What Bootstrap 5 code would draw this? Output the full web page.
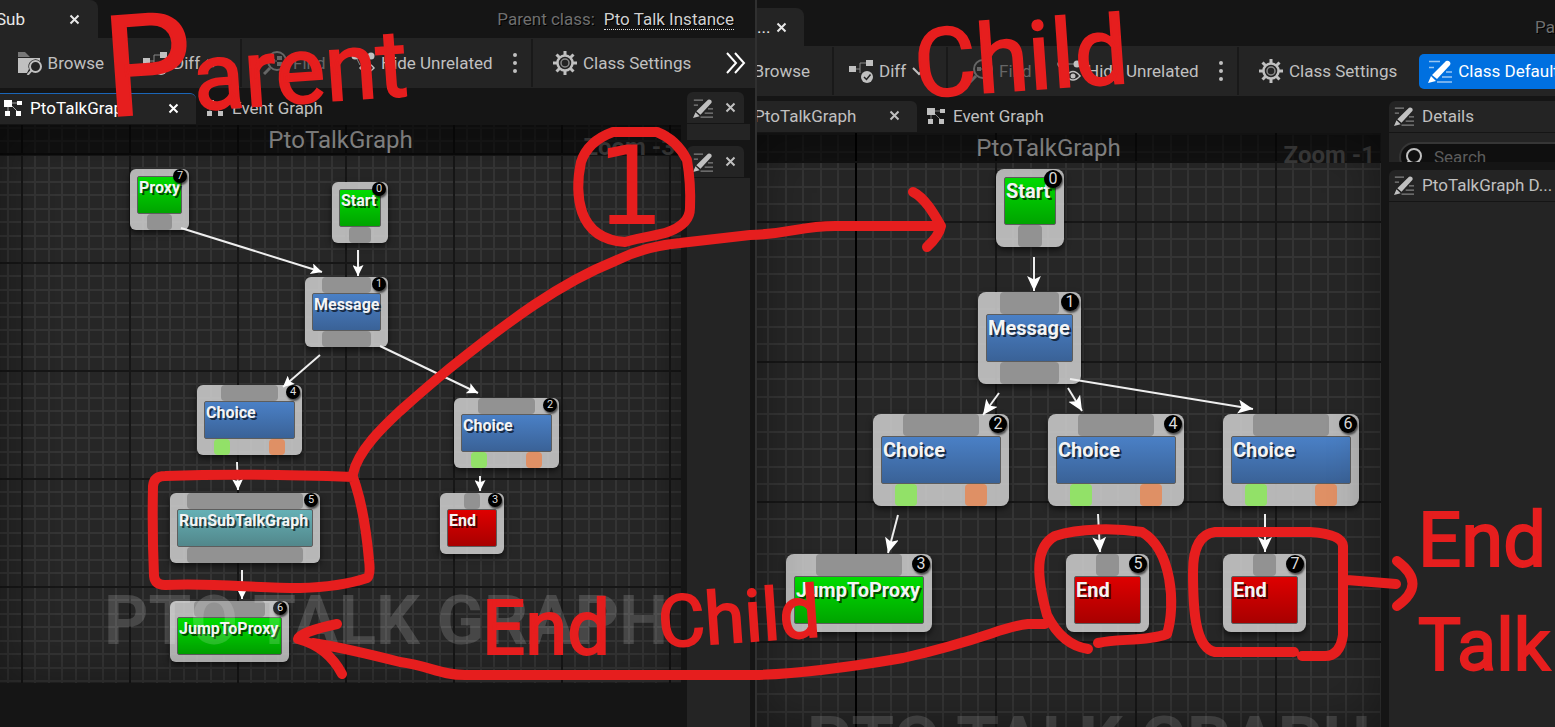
<!DOCTYPE html>
<html lang="en">
<head>
<meta charset="utf-8">
<meta name="viewport" content="width=device-width, initial-scale=1">
<title>Pto Talk Graph – parent and child</title>
<link href="https://cdn.jsdelivr.net/npm/bootstrap@5.3.0/dist/css/bootstrap.min.css" rel="stylesheet">
<style>
  :root { --panel:#242424; --frame:#151515; --fg:#c0c0c0; --ink:#e61e1e; }
  body { background:var(--frame); color:var(--fg); font:17px/20px Roboto, "Liberation Sans", sans-serif; overflow:hidden; }
  .workspace { display:grid; grid-template-columns:minmax(0,757fr) minmax(0,798fr); height:100vh; position:relative; }
  .editor { min-width:0; overflow:hidden; }
  .editor-parent { border-right:2px solid #303030; }
  button, a { color:inherit; font:inherit; white-space:nowrap; }
  .plain { background:none; border:0; padding:0; }
  .titlebar { height:38px; }
  .editor-child .titlebar { height:46px; padding-top:8px; }
  .doc-tab { background:var(--panel); border-radius:0 8px 0 0; color:#e8e8e8; }
  .editor-parent .doc-tab { width:98px; padding-right:18px; }
  .editor-parent .doc-tab span { margin-left:-4px; }
  .editor-child .doc-tab { width:47px; padding-right:17px; }
  .close-x { width:11px; height:11px; }
  .parent-class { color:#6f6f6f; padding-right:21px; gap:9px; text-shadow:1px 1px #000; }
  .parent-class a { border-bottom:1px dotted #ddd; color:#d0d0d0; }
  .toolbar { background:var(--panel); height:50px; overflow:hidden; }
  .tool-group { height:48px; border-right:2px solid #191919; }
  .tool-group svg, .cls svg { width:24px; height:24px; }
  .browse { width:128px; padding-right:22px; overflow:hidden; }
  .editor-child .browse { width:77px; }
  .diffs { width:114px; padding-left:15px; }
  .diffs svg:last-child { margin-left:-2px; }
  .finders { width:291px; padding-left:21px; }
  .finders .find { color:#666; width:88px; }
  .icon-text { gap:6px; }
  .dots { margin-left:20px; }
  .cls { padding-left:20px; }
  .defaults { background:#0070e0; color:#fff; border:0; border-radius:5px; height:35px; padding:0 9px; margin-left:22px; }
  .graph-col { min-width:0; }
  .tabs { height:37px; padding-top:5px; }
  .graph-tab { height:31px; padding-bottom:2px !important; background:var(--panel); border-radius:0 6px 0 0; }
  .editor-parent .graph-tab { width:196px; padding:0 17px 0 4px; color:#fff; border-top:1px solid #1b66b8; }
  .editor-child .graph-tab { width:160px; padding:0 17px 0 0; }
  .editor-child .graph-tab span { margin-left:-3px; }
  .graph-tab svg.g, .event svg.g { width:18px; height:18px; }
  .event { height:30px; padding-left:10px; }
  .canvas { position:relative; overflow:hidden; background:#262626; }
  .editor-parent .canvas { margin-right:6px; margin-bottom:44px; }
  .canvas .layer { position:absolute; inset:0; width:100%; height:100%; }
  .band { position:absolute; inset:0 0 auto 0; height:30px; background:rgba(0,0,0,.55); color:#8c8c8c; font-size:24px; line-height:31px; text-align:center; border-bottom:2px solid #0a0a0a; }
  .editor-child .band { border-color:#121212; padding-right:41px; }
  .zoom { position:absolute; right:6px; top:7px; color:#3a3a3a; font-size:24px; line-height:30px; font-weight:700; }
  .watermark { position:absolute; left:104px; top:456px; font-size:69px; line-height:80px; font-weight:700; color:rgba(255,255,255,.16); white-space:nowrap; }
  .editor-child .watermark { left:50px; top:569px; }
  .shade { position:absolute; inset:0; box-shadow:inset 0 0 50px rgba(0,0,0,.4); }
  .node { --u:16px; --pad:7px; --core:38px; position:absolute; border-radius:6px; background:rgba(200,200,200,.9); box-shadow:0 3px 6px rgba(0,0,0,.6); padding:0 var(--pad); font-weight:700; font-size:16px; line-height:22px; color:#f4f4f4; display:flex; flex-direction:column; }
  .editor-child .node { --u:22px; --pad:8px; --core:48px; font-size:20px; line-height:26px; border-radius:8px; }
  .node .pin { height:var(--u); background:#929292; border-radius:4px; margin:0 10px; }
  .editor-child .node .pin { margin:0 14px; }
  .node.out .pin, .node.end .pin { margin:0 17px; }
  .editor-child .out .pin, .editor-child .end .pin { margin:0 22px; }
  .node.root { padding-top:var(--pad); }
  .node.end { padding-bottom:var(--pad); }
  .node .core { height:var(--core); border:1px solid #5d5d5d; border-radius:2px; padding-left:1px; white-space:nowrap; text-shadow:2px 2px rgba(0,0,0,.65); background:linear-gradient(#4a80c6,#3a6297); }
  .green .core { background:linear-gradient(#00dc00,#00a400) !important; }
  .red .core { background:linear-gradient(#de0000,#a80000) !important; }
  .teal .core { background:linear-gradient(#65b0b5,#52878b) !important; }
  .node .outs { display:flex; justify-content:space-between; padding:0 10px; }
  .editor-child .outs { padding:0 14px; }
  .outs i { width:var(--u); height:var(--u); border-radius:4px; background:#92e168; }
  .outs i + i { background:#df9065; }
  .num { position:absolute; right:2px; top:0; width:14px; height:14px; border-radius:50%; background:#000; color:#ddd; font-size:11px; line-height:14px; font-weight:400; text-align:center; box-shadow:1px 2px 2px rgba(0,0,0,.6); }
  .editor-child .num { width:18px; height:18px; font-size:16px; line-height:18px; top:1px; }
  .side-parent { width:68px; }
  .side-parent .mini-tab { width:57px; height:31px; background:var(--panel); border-radius:6px 6px 0 0; padding:0 8px 0 6px; margin-bottom:1px; }
  .side-parent .slot { background:var(--panel); width:63px; }
  .gap-slot { height:16px; margin-bottom:6px; }
  .side-child { width:166px; padding-top:5px; }
  .side-child .head { height:32px; background:var(--panel); border-bottom:1px solid #151515; border-radius:6px 0 0 0; padding:0 0 2px 5px; white-space:nowrap; overflow:hidden; }
  .head svg, .mini-tab svg.p { width:20px; height:20px; flex:none; }
  .search-clip { height:29px; overflow:hidden; background:var(--panel); padding:9px 0 0 10px; margin-bottom:8px; }
  .search-box { height:30px; width:180px; background:#0f0f0f; border:2px solid #363636; border-radius:15px; padding-left:3px; gap:10px; }
  .search-box svg { width:20px; height:20px; flex:none; }
  .search-box input { background:none; border:0; color:var(--fg); width:130px; padding:0; font:inherit; }
  .search-box input::placeholder { color:#5c5c5c; opacity:1; }
  .ink { position:absolute; inset:0; width:100%; height:100%; pointer-events:none; overflow:visible; }
  .note { position:absolute; color:var(--ink); font-size:76px; line-height:76px; -webkit-text-stroke:2px var(--ink); white-space:nowrap; pointer-events:none; }
  .tilt { transform:rotate(-4deg); }
  .n-parent { left:104px; top:-7px; font-size:94px; line-height:130px; }
  .n-parent b { font-weight:400; font-size:140px; }
  .n-child { left:914px; top:12px; font-size:95px; line-height:92px; }
  .n-one { left:596px; top:133px; font-family:"DejaVu Sans", sans-serif; font-size:108px; line-height:108px; -webkit-text-stroke:0; }
  .n-end { left:482px; top:590px; }
  .n-child2 { left:658px; top:580px; font-size:72px; }
  .n-end2 { left:1418px; top:502px; }
  .n-talk { left:1418px; top:608px; font-size:72px; }
</style>
</head>
<body>
<svg class="d-none" aria-hidden="true">
  <symbol id="x" viewBox="0 0 11 11"><path d="M1.500 1.500 9.500 9.500M9.500 1.500 1.500 9.500" stroke="currentColor" stroke-width="2" fill="none"/></symbol>
  <symbol id="folder" viewBox="0 0 24 24"><path d="M0 1h7l5 5H0z" fill="#777"/><path d="M0 7h22v3a7 7 0 0 0-11 8l-2 4H0z" fill="currentColor"/><circle cx="17.500" cy="15.500" r="5.500" fill="none" stroke="currentColor" stroke-width="2"/><path d="M13.500 19.500 9.500 24" stroke="currentColor" stroke-width="2"/></symbol>
  <symbol id="diff" viewBox="0 0 24 24"><path d="M7 10h4V4h6M11 10v4" stroke="#888" fill="none"/><path d="M0 7h7v6H0zM17 1h7v6h-7z" fill="currentColor"/><circle cx="18" cy="18" r="6" fill="currentColor"/><path d="m15 18 2.500 2.500 4-5" stroke="#222" stroke-width="1.500" fill="none"/></symbol>
  <symbol id="find" viewBox="0 0 24 24"><circle cx="14" cy="10" r="9" fill="none" stroke="currentColor" stroke-width="2"/><path d="m7 17-6 6" stroke="currentColor" stroke-width="3"/><path d="M8 8h4v4H8zM14 5h5v4h-5zM14 11h5v4h-5z" fill="currentColor"/><path d="M12 10h2" stroke="currentColor"/></symbol>
  <symbol id="hide" viewBox="0 0 24 24"><path d="M4 5h16M5 6l4 8" stroke="#888" fill="none"/><circle cx="4" cy="5" r="3.500" fill="currentColor"/><circle cx="20" cy="5" r="3.500" fill="currentColor"/><path d="M9 17q7-9 14 0-7 8-14 0z" fill="#242424" stroke="currentColor" stroke-width="1.500"/><circle cx="16" cy="17" r="2.500" fill="currentColor"/></symbol>
  <symbol id="gear" viewBox="0 0 24 24"><circle cx="12" cy="12" r="7.500" fill="none" stroke="currentColor" stroke-width="2.500"/><circle cx="12" cy="12" r="4" fill="none" stroke="#888" stroke-width="1.500"/><path d="M12 0v4M12 20v4M0 12h4M20 12h4M3.500 3.500l3 3M17.500 17.500l3 3M20.500 3.500l-3 3M6.500 17.500l-3 3" stroke="currentColor" stroke-width="3"/></symbol>
  <symbol id="pencil" viewBox="0 0 24 24"><path d="M1 2.500h11M1 8.500h5M18 13h6M14 18h10M9 23h15" stroke="currentColor" stroke-width="1.500" opacity=".6"/><path d="m4 16 14-14q2-1 4 1 1 2 0 3L9 20zM3 17l5 5-8 2z" fill="currentColor"/></symbol>
  <symbol id="graph" viewBox="0 0 18 18"><path d="M4 6v8M7 6l8 8M7 4h7" stroke="currentColor" opacity=".6"/><path d="M0 1h8v7H0zM13 2h5v4h-5zM1 12h5v5H1zM12 12h5v5h-5z" fill="currentColor"/></symbol>
</svg>

<main class="workspace">
  <section class="editor editor-parent d-flex flex-column">
    <header class="titlebar d-flex align-items-stretch justify-content-between flex-shrink-0">
      <div class="doc-tab d-flex align-items-center justify-content-between"><span>Sub</span><button class="plain d-flex" aria-label="Close"><svg class="close-x"><use href="#x"/></svg></button></div>
      <div class="parent-class d-flex align-items-center"><span>Parent class:</span><a href="#" class="text-decoration-none">Pto Talk Instance</a></div>
    </header>
    <nav class="toolbar d-flex flex-shrink-0 align-items-center">
      <div class="tool-group browse d-flex align-items-center justify-content-end flex-shrink-0"><button class="plain d-flex align-items-center icon-text"><svg><use href="#folder"/></svg>Browse</button></div>
      <div class="tool-group diffs d-flex align-items-center flex-shrink-0"><button class="plain d-flex align-items-center icon-text"><svg><use href="#diff"/></svg>Diff <svg viewBox="0 0 24 24"><path d="m3 9 6 6 6-6" fill="none" stroke="currentColor" stroke-width="2"/></svg></button></div>
      <div class="tool-group finders d-flex align-items-center flex-shrink-0">
        <button class="plain find d-flex align-items-center icon-text"><svg><use href="#find"/></svg>Find</button>
        <button class="plain d-flex align-items-center icon-text"><svg><use href="#hide"/></svg>Hide Unrelated</button>
        <button class="plain dots d-flex" aria-label="More"><svg style="width:4px" viewBox="0 0 4 24"><path d="M2 4v0M2 12v0M2 20v0" stroke="currentColor" stroke-width="4" stroke-linecap="round"/></svg></button>
      </div>
      <div class="cls d-flex align-items-center"><button class="plain d-flex align-items-center icon-text"><svg><use href="#gear"/></svg>Class Settings</button></div>
      <button class="plain ms-auto me-2 d-flex text-white" aria-label="Show more"><svg width="24" height="24" viewBox="0 0 24 24"><path d="m4 2 9 10-9 10M12 2l9 10-9 10" fill="none" stroke="currentColor" stroke-width="2"/></svg></button>
    </nav>
    <div class="d-flex flex-grow-1 overflow-hidden">
      <div class="graph-col d-flex flex-column flex-grow-1">
        <div class="tabs d-flex align-items-start flex-shrink-0">
          <div class="graph-tab d-flex align-items-center justify-content-between"><span class="d-flex align-items-center gap-2"><svg class="g"><use href="#graph"/></svg>PtoTalkGraph</span><button class="plain d-flex" aria-label="Close"><svg class="close-x"><use href="#x"/></svg></button></div>
          <button class="plain event d-flex align-items-center gap-2"><svg class="g"><use href="#graph"/></svg>Event Graph</button>
        </div>
        <div class="canvas flex-grow-1">
          <svg class="layer" aria-hidden="true">
            <defs>
              <pattern id="gridL" x="21" y="29" width="108" height="108" patternUnits="userSpaceOnUse"><path d="M14 0v108M28 0v108M41 0v108M55 0v108M68 0v108M82 0v108M95 0v108M0 14h108M0 28h108M0 41h108M0 55h108M0 68h108M0 82h108M0 95h108" stroke="#343434" stroke-width="2"/><path d="M1 0v108M0 1h108" stroke="#161616" stroke-width="2"/></pattern>
              <marker id="headL" viewBox="0 0 10 10" refX="10" refY="5" markerWidth="11" markerHeight="11" markerUnits="userSpaceOnUse" orient="auto"><path d="M0 0 10 5 0 10 2 5z" fill="#fff" stroke="none"/></marker>
            </defs>
            <rect width="100%" height="100%" fill="url(#gridL)"/>
          </svg>
          <div class="band">PtoTalkGraph</div><div class="zoom">Zoom -3</div>
          <div class="node root out green" style="left:130px;top:44px;width:59px"><div class="core">Proxy</div><div class="pin" style="margin:0 10px"></div><span class="num">7</span></div>
          <div class="node root green" style="left:332px;top:57px;width:56px"><div class="core">Start</div><div class="pin"></div><span class="num">0</span></div>
          <div class="node" style="left:305px;top:152px;width:83px"><div class="pin"></div><div class="core">Message</div><div class="pin"></div><span class="num">1</span></div>
          <div class="node out" style="left:197px;top:260px;width:105px"><div class="pin"></div><div class="core">Choice</div><div class="outs"><i></i><i></i></div><span class="num">4</span></div>
          <div class="node out" style="left:454px;top:273px;width:105px"><div class="pin"></div><div class="core">Choice</div><div class="outs"><i></i><i></i></div><span class="num">2</span></div>
          <div class="node teal" style="left:170px;top:368px;width:150px"><div class="pin"></div><div class="core">RunSubTalkGraph</div><div class="pin"></div><span class="num">5</span></div>
          <div class="node end green" style="left:170px;top:476px;width:119px"><div class="pin"></div><div class="core">JumpToProxy</div><span class="num">6</span></div>
          <div class="node end red" style="left:440px;top:368px;width:64px"><div class="pin"></div><div class="core">End</div><span class="num">3</span></div>
          <svg class="layer" aria-hidden="true"><g transform="translate(0 -125)" stroke="#eee" stroke-width="2">
            <path marker-end="url(#headL)" d="M181 228 322 272"/><path marker-end="url(#headL)" d="M358 250V276"/><path marker-end="url(#headL)" d="M320 355 283 387"/><path marker-end="url(#headL)" d="M380 346 478 393"/><path marker-end="url(#headL)" d="M237 462 238 490"/><path marker-end="url(#headL)" d="M242 570V599"/><path marker-end="url(#headL)" d="M480 476V491"/></g></svg>
          <div class="watermark">PTO TALK GRAPH</div>
          <div class="shade"></div>
        </div>
      </div>
      <aside class="side-parent d-flex flex-column flex-shrink-0 pt-1">
        <div class="mini-tab d-flex align-items-center justify-content-between"><svg class="p"><use href="#pencil"/></svg><button class="plain d-flex" aria-label="Close"><svg class="close-x"><use href="#x"/></svg></button></div>
        <div class="slot gap-slot"></div>
        <div class="mini-tab d-flex align-items-center justify-content-between"><svg class="p"><use href="#pencil"/></svg><button class="plain d-flex" aria-label="Close"><svg class="close-x"><use href="#x"/></svg></button></div>
        <div class="slot flex-grow-1"></div>
      </aside>
    </div>
  </section>

  <section class="editor editor-child d-flex flex-column">
    <header class="titlebar d-flex justify-content-between flex-shrink-0 overflow-hidden">
      <div class="doc-tab d-flex align-items-center justify-content-between"><span>...</span><button class="plain d-flex" aria-label="Close"><svg class="close-x"><use href="#x"/></svg></button></div>
      <div class="parent-class pe-0 d-flex align-items-center">Pa</div>
    </header>
    <nav class="toolbar d-flex flex-shrink-0 align-items-center">
      <div class="tool-group browse d-flex align-items-center justify-content-end flex-shrink-0"><button class="plain">Browse</button></div>
      <div class="tool-group diffs d-flex align-items-center flex-shrink-0"><button class="plain d-flex align-items-center icon-text"><svg><use href="#diff"/></svg>Diff <svg viewBox="0 0 24 24"><path d="m3 9 6 6 6-6" fill="none" stroke="currentColor" stroke-width="2"/></svg></button></div>
      <div class="tool-group finders d-flex align-items-center flex-shrink-0">
        <button class="plain find d-flex align-items-center icon-text"><svg><use href="#find"/></svg>Find</button>
        <button class="plain d-flex align-items-center icon-text"><svg><use href="#hide"/></svg>Hide Unrelated</button>
        <button class="plain dots d-flex" aria-label="More"><svg style="width:4px" viewBox="0 0 4 24"><path d="M2 4v0M2 12v0M2 20v0" stroke="currentColor" stroke-width="4" stroke-linecap="round"/></svg></button>
      </div>
      <div class="cls d-flex align-items-center"><button class="plain d-flex align-items-center icon-text"><svg><use href="#gear"/></svg>Class Settings</button><button class="defaults d-flex align-items-center icon-text"><svg><use href="#pencil"/></svg>Class Defaults</button></div>
    </nav>
    <div class="d-flex flex-grow-1 overflow-hidden">
      <div class="graph-col d-flex flex-column flex-grow-1">
        <div class="tabs d-flex align-items-start flex-shrink-0">
          <div class="graph-tab d-flex align-items-center justify-content-between"><span>PtoTalkGraph</span><button class="plain d-flex" aria-label="Close"><svg class="close-x"><use href="#x"/></svg></button></div>
          <button class="plain event d-flex align-items-center gap-2"><svg class="g"><use href="#graph"/></svg>Event Graph</button>
        </div>
        <div class="canvas flex-grow-1">
          <svg class="layer" aria-hidden="true">
            <defs>
              <pattern id="gridR" x="98" y="88" width="140" height="140" patternUnits="userSpaceOnUse"><path d="M18 0v140M36 0v140M53 0v140M71 0v140M88 0v140M106 0v140M123 0v140M0 18h140M0 36h140M0 53h140M0 71h140M0 88h140M0 106h140M0 123h140" stroke="#343434" stroke-width="2"/><path d="M1 0v140M0 1h140" stroke="#161616" stroke-width="2"/></pattern>
              <marker id="headR" viewBox="0 0 13 13" refX="13" refY="6" markerWidth="15" markerHeight="15" markerUnits="userSpaceOnUse" orient="auto"><path d="M0 0 13 6 0 12 3 6z" fill="#fff" stroke="none"/></marker>
            </defs>
            <rect width="100%" height="100%" fill="url(#gridR)"/><path d="M99 0V900" stroke="#000" stroke-width="2"/>
          </svg>
          <div class="band">PtoTalkGraph</div><div class="zoom">Zoom -1</div>
          <div class="node root green" style="left:239px;top:36px;width:68px"><div class="core">Start</div><div class="pin"></div><span class="num">0</span></div>
          <div class="node" style="left:221px;top:159px;width:103px"><div class="pin"></div><div class="core">Message</div><div class="pin"></div><span class="num">1</span></div>
          <div class="node out" style="left:116px;top:281px;width:136px"><div class="pin"></div><div class="core">Choice</div><div class="outs"><i></i><i></i></div><span class="num">2</span></div>
          <div class="node out" style="left:291px;top:281px;width:136px"><div class="pin"></div><div class="core">Choice</div><div class="outs"><i></i><i></i></div><span class="num">4</span></div>
          <div class="node out" style="left:466px;top:281px;width:136px"><div class="pin"></div><div class="core">Choice</div><div class="outs"><i></i><i></i></div><span class="num">6</span></div>
          <div class="node end green" style="left:29px;top:421px;width:146px"><div class="pin"></div><div class="core">JumpToProxy</div><span class="num">3</span></div>
          <div class="node end red" style="left:309px;top:421px;width:83px"><div class="pin"></div><div class="core">End</div><span class="num">5</span></div>
          <div class="node end red" style="left:466px;top:421px;width:83px"><div class="pin"></div><div class="core">End</div><span class="num">7</span></div>
          <svg class="layer" aria-hidden="true"><g transform="translate(-757 -133)" stroke="#eee" stroke-width="2">
            <path marker-end="url(#headR)" d="M1034 257V291"/><path marker-end="url(#headR)" d="M999 393 983 415"/><path marker-end="url(#headR)" d="M1068 388 1082 411"/><path marker-end="url(#headR)" d="M1070 379 1253 409"/><path marker-end="url(#headR)" d="M898 515 888 553"/><path marker-end="url(#headR)" d="M1098 514 1100 552"/><path marker-end="url(#headR)" d="M1265 514V552"/></g></svg>
          <div class="watermark">PTO TALK GRAPH</div>
          <div class="shade"></div>
        </div>
      </div>
      <aside class="side-child d-flex flex-column flex-shrink-0 ms-2">
        <div class="head d-flex align-items-center gap-2"><svg><use href="#pencil"/></svg>Details</div>
        <div class="search-clip"><div class="search-box d-flex align-items-center"><svg viewBox="0 0 20 20"><circle cx="10" cy="9" r="7" fill="none" stroke="currentColor" stroke-width="2"/><path d="m5 14-4 5" stroke="currentColor" stroke-width="2"/></svg><label class="visually-hidden" for="q">Search</label><input id="q" type="text" placeholder="Search"></div></div>
        <div class="head d-flex align-items-center gap-2"><svg><use href="#pencil"/></svg>PtoTalkGraph D...</div>
        <div class="flex-grow-1" style="background:var(--panel)"></div>
      </aside>
    </div>
  </section>

  <!-- red pen annotations over both editors -->
  <svg class="ink" aria-hidden="true"><g fill="none" stroke="#e61e1e" stroke-width="10" stroke-linecap="round" stroke-linejoin="round">
    <path d="M625 242C645 236 657 236 668 232Q690 224 690 208Q691 183 687 160Q677 140 657 132H613Q588 141 581 162Q575 190 582 212Q592 240 625 242"/>
    <path d="M353 474C358 450 385 425 400 411Q428 386 450 368C510 320 560 283 615 261Q645 246 680 243L750 235C790 234 800 226 835 226H938M913 192C925 198 934 214 941 226Q939 236 927 247"/>
    <path d="M353 477Q250 473 165 476Q154 476 153 486Q152 530 154 576Q155 585 165 585C220 583 250 588 300 588Q340 587 367 578Q371 576 369 560Q365 515 356 486Z"/>
    <path d="M1045 624H1028C1000 627 990 638 903 658C850 667 800 674 755 675H465C440 675 430 666 400 662Q345 648 313 643M337 624Q300 632 298 639Q328 647 342 674"/>
    <path d="M1098 643C1120 638 1145 642 1167 634C1176 605 1172 550 1142 532C1115 528 1080 528 1055 536C1035 547 1036 575 1047 615Q1062 645 1088 649"/>
    <path d="M1294 652H1215C1195 648 1193 610 1193 572Q1193 535 1215 532H1310Q1342 534 1343 546V635Q1340 656 1325 656H1302M1347 580 1396 584M1397 561Q1428 584 1397 606"/>
  </g></svg>
  <div class="note n-parent tilt"><b>P</b>arent</div>
  <div class="note n-child tilt">Child</div>
  <div class="note n-one">1</div>
  <div class="note n-end">End</div>
  <div class="note n-child2 tilt">Child</div>
  <div class="note n-end2">End</div>
  <div class="note n-talk">Talk</div>
</main>
<script src="https://cdn.jsdelivr.net/npm/bootstrap@5.3.0/dist/js/bootstrap.bundle.min.js"></script>
</body>
</html>
